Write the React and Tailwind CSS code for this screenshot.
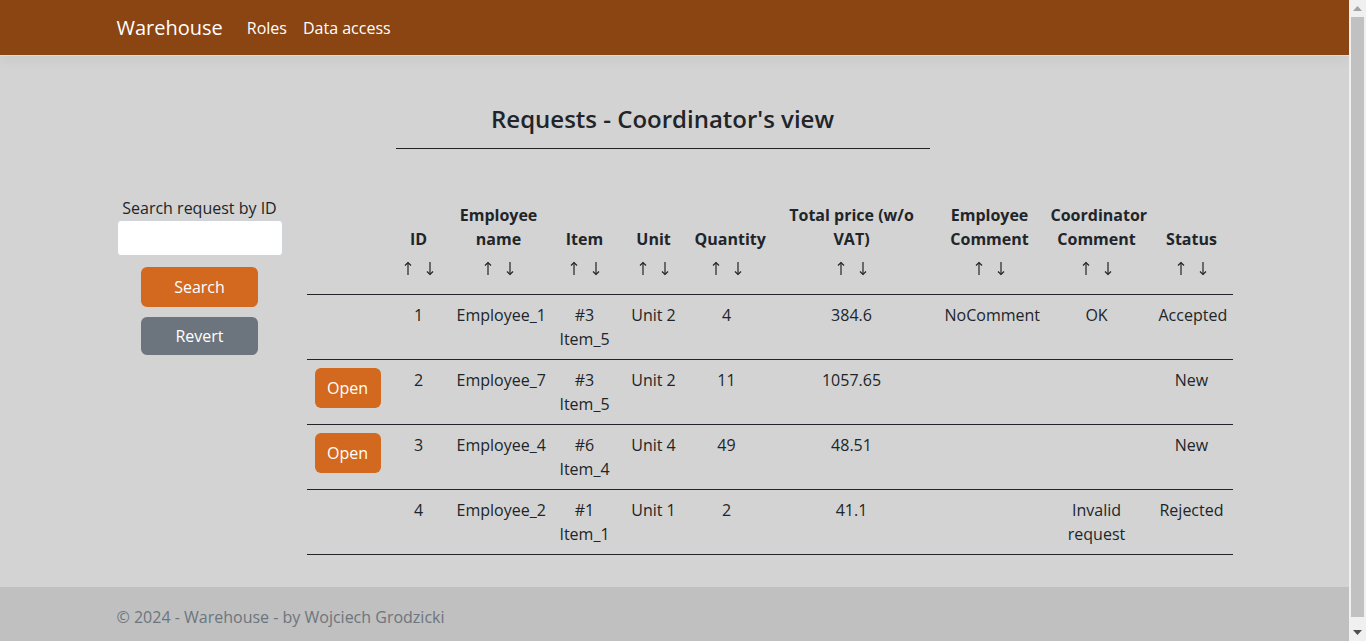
import React from 'react'

const columns = [
  { key: 'open', label: [], width: 'w-[82px]' },
  { key: 'id', label: ['ID'], width: 'w-[60px]' },
  { key: 'employee', label: ['Employee', 'name'], width: 'w-[100px]' },
  { key: 'item', label: ['Item'], width: 'w-[72px]' },
  { key: 'unit', label: ['Unit'], width: 'w-[66px]' },
  { key: 'quantity', label: ['Quantity'], width: 'w-[80px]' },
  { key: 'price', label: ['Total price (w/o', 'VAT)'], width: 'w-[170px]' },
  { key: 'empComment', label: ['Employee', 'Comment'], width: 'w-[106px]' },
  { key: 'coordComment', label: ['Coordinator', 'Comment'], width: 'w-[108px]' },
  { key: 'status', label: ['Status'], width: 'w-[82px]' },
]

const requests = [
  { id: 1, employee: 'Employee_1', item: ['#3', 'Item_5'], unit: 'Unit 2', quantity: 4, price: '384.6', empComment: 'NoComment', coordComment: ['OK'], status: 'Accepted', canOpen: false },
  { id: 2, employee: 'Employee_7', item: ['#3', 'Item_5'], unit: 'Unit 2', quantity: 11, price: '1057.65', empComment: '', coordComment: [], status: 'New', canOpen: true },
  { id: 3, employee: 'Employee_4', item: ['#6', 'Item_4'], unit: 'Unit 4', quantity: 49, price: '48.51', empComment: '', coordComment: [], status: 'New', canOpen: true },
  { id: 4, employee: 'Employee_2', item: ['#1', 'Item_1'], unit: 'Unit 1', quantity: 2, price: '41.1', empComment: '', coordComment: ['Invalid', 'request'], status: 'Rejected', canOpen: false },
]

function Lines({ lines }) {
  return lines.map((l, i) => (
    <React.Fragment key={i}>
      {i > 0 && <br />}
      {l}
    </React.Fragment>
  ))
}

function Arrow({ down }) {
  return (
    <svg width="8" height="15" viewBox="0 0 8 15" className="mx-[7px]" fill="none" stroke="#212529" strokeWidth="1.2">
      {down ? (
        <>
          <path d="M4 1V13.5" />
          <path d="M1 10.5L4 13.5L7 10.5" />
        </>
      ) : (
        <>
          <path d="M4 1.5V14" />
          <path d="M1 4.5L4 1.5L7 4.5" />
        </>
      )}
    </svg>
  )
}

export default function App() {
  return (
    <div
      className="h-[641px] flex overflow-hidden bg-[#d3d3d3] text-[#212529] text-base leading-6"
      style={{ fontFamily: '"Segoe UI", "Open Sans", "Noto Sans", sans-serif' }}
    >
      <div className="w-[1349px] shrink-0">
        <nav className="h-14 bg-[#8b4513] border-b border-[#e8d6c8] shadow-[0_4px_12px_rgba(0,0,0,0.05)]">
          <div className="max-w-[1140px] mx-auto px-3 h-full flex items-center">
            <a className="text-xl text-white mr-4">Warehouse</a>
            <a className="text-white px-2">Roles</a>
            <a className="text-white px-2">Data access</a>
          </div>
        </nav>

        <main className="max-w-[1140px] mx-auto px-3 pt-12 pb-8">
          <div className="w-[534px] ml-[279px]">
            <h3 className="text-2xl leading-[29px] font-semibold text-center text-[#212529]">
              Requests - Coordinator's view
            </h3>
            <hr className="mt-[15px] border-t border-[#222]" />
          </div>

          <div className="flex mt-[46px] -mx-3">
            <div className="w-[190px] px-3 flex flex-col items-center pt-px">
              <label className="text-[#212529]">Search request by ID</label>
              <input type="text" className="w-full h-9 bg-white rounded border border-[#ced4da]" />
              <button className="mt-[11px] w-[117px] h-10 rounded-md bg-[#d2691e] text-white">Search</button>
              <button className="mt-[10px] w-[117px] h-[38px] rounded-md bg-[#6c757d] text-white">Revert</button>
            </div>

            <div className="w-[950px] px-3">
              <table className="w-[926px] table-fixed border-collapse">
                <colgroup>
                  {columns.map(c => (
                    <col key={c.key} className={c.width} />
                  ))}
                </colgroup>
                <thead>
                  <tr className="border-b border-[#212529]">
                    {columns.map(c => (
                      <th key={c.key} className="p-2 align-bottom text-center font-bold whitespace-nowrap">
                        {c.label.length > 0 && (
                          <>
                            <div><Lines lines={c.label} /></div>
                            <div className="h-[35px] flex items-center justify-center">
                              <Arrow />
                              <Arrow down />
                            </div>
                          </>
                        )}
                      </th>
                    ))}
                  </tr>
                </thead>
                <tbody>
                  {requests.map(r => (
                    <tr key={r.id} className="border-b border-[#212529]">
                      <td className="p-2 align-top">
                        {r.canOpen && (
                          <button className="w-[66px] h-10 rounded-md bg-[#d2691e] text-white">Open</button>
                        )}
                      </td>
                      <td className="p-2 align-top text-center">{r.id}</td>
                      <td className="p-2 align-top text-center whitespace-nowrap">{r.employee}</td>
                      <td className="p-2 align-top text-center whitespace-nowrap"><Lines lines={r.item} /></td>
                      <td className="p-2 align-top text-center whitespace-nowrap">{r.unit}</td>
                      <td className="p-2 align-top text-center">{r.quantity}</td>
                      <td className="p-2 align-top text-center">{r.price}</td>
                      <td className="p-2 align-top text-center whitespace-nowrap">{r.empComment}</td>
                      <td className="p-2 align-top text-center whitespace-nowrap"><Lines lines={r.coordComment} /></td>
                      <td className="p-2 align-top text-center whitespace-nowrap">{r.status}</td>
                    </tr>
                  ))}
                </tbody>
              </table>
            </div>
          </div>
        </main>

        <footer className="bg-[#c0c0c0] h-[60px] leading-[60px] text-[#6c757d]">
          <div className="max-w-[1140px] mx-auto px-3">© 2024 - Warehouse - by Wojciech Grodzicki</div>
        </footer>
      </div>

      {/* fake scrollbar */}
      <div className="w-[17px] shrink-0 bg-[#f0f0f0] flex flex-col items-center">
        <div className="h-[17px] flex items-center justify-center">
          <svg width="9" height="5" viewBox="0 0 9 5"><path d="M0 5L4.5 0L9 5Z" fill="#a3a3a3" /></svg>
        </div>
        <div className="flex-1 w-full px-[2px] pb-px">
          <div className="h-[600px] bg-[#c1c1c1]" />
        </div>
        <div className="h-[17px] flex items-center justify-center">
          <svg width="9" height="5" viewBox="0 0 9 5"><path d="M0 0L9 0L4.5 5Z" fill="#505050" /></svg>
        </div>
      </div>
    </div>
  )
}
